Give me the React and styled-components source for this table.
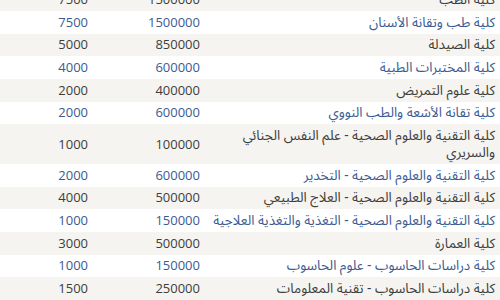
import React from "react";
import styled, { createGlobalStyle } from "styled-components";

const Global = createGlobalStyle`
  html, body { margin: 0; padding: 0; background: #ffffff; overflow: hidden; }
  body { font-family: "Open Sans", "DejaVu Sans", sans-serif; }
`;

const Table = styled.table`
  direction: rtl;
  width: 500px;
  margin-top: -11.67px;
  border-collapse: collapse;
  table-layout: fixed;
  font-size: 13px;
  line-height: 17.33px;
`;

const Row = styled.tr`
  background: ${(p) => (p.$shade ? "#f5f4f0" : "#ffffff")};
  color: ${(p) => (p.$shade ? "#3d3d3d" : "#3b5a91")};
`;

const Cell = styled.td`
  padding: 2.67px 5px;
  text-align: right;
  vertical-align: middle;
`;

const NameCell = styled(Cell)`
  padding-left: 1px;
  font-size: 13.5px;
  font-family: "Noto Sans Arabic", "Noto Sans Arabic UI", "Noto Naskh Arabic", "Open Sans", "DejaVu Sans", sans-serif;
`;

const Col = styled.col`
  width: ${(p) => p.$w}px;
`;

const rows = [
  ["كلية الطب", "1500000", "7500"],
  ["كلية طب وتقانة الأسنان", "1500000", "7500"],
  ["كلية الصيدلة", "850000", "5000"],
  ["كلية المختبرات الطبية", "600000", "4000"],
  ["كلية علوم التمريض", "400000", "2000"],
  ["كلية تقانة الأشعة والطب النووي", "600000", "2000"],
  ["كلية التقنية والعلوم الصحية - علم النفس الجنائي والسريري", "100000", "1000"],
  ["كلية التقنية والعلوم الصحية - التخدير", "600000", "2000"],
  ["كلية التقنية والعلوم الصحية - العلاج الطبيعي", "500000", "4000"],
  ["كلية التقنية والعلوم الصحية - التغذية والتغذية العلاجية", "150000", "1000"],
  ["كلية العمارة", "500000", "3000"],
  ["كلية دراسات الحاسوب - علوم الحاسوب", "150000", "1000"],
  ["كلية دراسات الحاسوب - تقنية المعلومات", "250000", "1500"],
];

export default function App() {
  return (
    <>
      <Global />
      <Table>
        <colgroup>
          <Col $w={295} />
          <Col $w={112} />
          <Col $w={93} />
        </colgroup>
        <tbody>
          {rows.map((r, i) => (
            <Row key={i} $shade={i % 2 === 0}>
              <NameCell>{r[0]}</NameCell>
              <Cell>{r[1]}</Cell>
              <Cell>{r[2]}</Cell>
            </Row>
          ))}
        </tbody>
      </Table>
    </>
  );
}
